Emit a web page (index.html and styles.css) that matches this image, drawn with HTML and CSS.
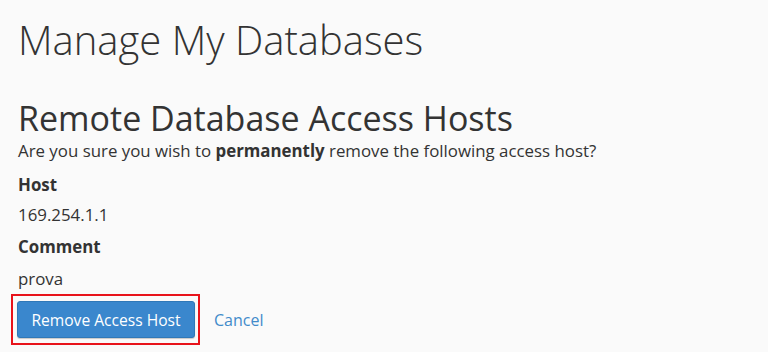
FILE: index.html
```html
<!DOCTYPE html>
<html lang="en">
<head>
<meta charset="UTF-8">
<meta name="viewport" content="width=device-width, initial-scale=1.0">
<title>Manage My Databases</title>
<link rel="stylesheet" href="styles.css">
</head>
<body>
	<div class="page">
		<h1 class="page-title">Manage My Databases</h1>
		<h2 class="section-title">Remote Database Access Hosts</h2>
		<p class="confirm">Are you sure you wish to <strong>permanently</strong> remove the following access host?</p>

		<div class="field">
			<div class="field-label">Host</div>
			<div class="field-value">169.254.1.1</div>
		</div>
		<div class="field">
			<div class="field-label">Comment</div>
			<div class="field-value">prova</div>
		</div>

		<div class="actions">
			<span class="highlight">
				<button class="btn-primary" type="button">Remove Access Host</button>
			</span>
			<a href="#" class="cancel-link">Cancel</a>
		</div>
	</div>
</body>
</html>
```

FILE: styles.css
```css
body {
	margin: 0;
	background: #fafafa;
	color: #333;
	font-family: "Open Sans", "Liberation Sans", sans-serif;
	font-size: 16.85px;
}

.page {
	padding: 0 18px;
}

.page-title {
	margin: 0;
	padding-top: 14px;
	font-size: 40px;
	font-weight: 300;
	line-height: 52px;
}

.section-title {
	margin: 32px 0 0;
	font-size: 34px;
	font-weight: 400;
	line-height: 40px;
}

.confirm {
	margin: 2px 0 0;
	line-height: 22px;
}

.field-label {
	margin-top: 12px;
	font-weight: 700;
	line-height: 22px;
}

.field-value {
	margin-top: 8px;
	line-height: 22px;
}

.field + .field .field-label {
	margin-top: 10px;
}

.field + .field .field-value {
	margin-top: 10px;
}

/* 按钮外面的红框 */
.actions {
	display: flex;
	align-items: center;
	margin: 4px 0 0 -7px;
}

.highlight {
	display: inline-block;
	border: 2px solid #e8131b;
	padding: 5px 3px 5px 4px;
}

.btn-primary {
	display: block;
	width: 178px;
	height: 37px;
	padding: 0;
	border: 1px solid #2f78b8;
	border-radius: 3px;
	background: #3a87cd;
	color: #fff;
	font-family: inherit;
	font-size: 15.6px;
	box-shadow: 0 1px 1px rgba(0, 0, 0, 0.2);
	cursor: pointer;
}

.cancel-link {
	margin-left: 14px;
	color: #428bca;
	font-size: 16px;
	text-decoration: none;
}
```
